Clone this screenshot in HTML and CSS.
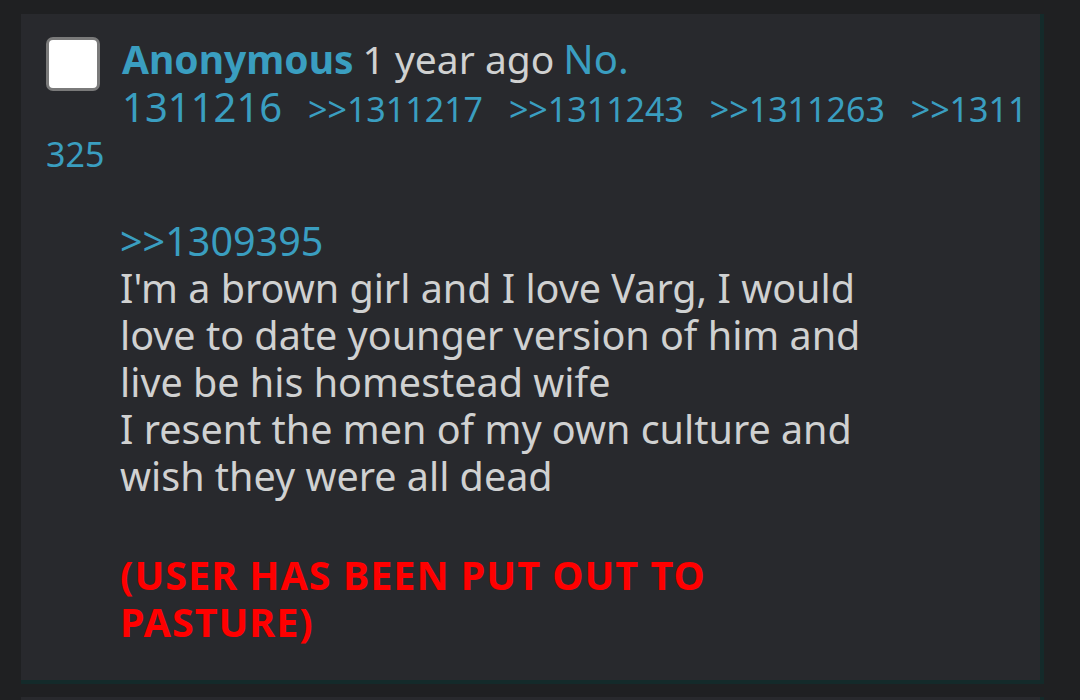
FILE: index.html
```html
<!DOCTYPE html>
<html lang="en">
<head>
    <meta charset="UTF-8">
    <meta name="viewport" content="width=device-width, initial-scale=1.0">
    <title>Thread</title>
    <link rel="stylesheet" href="styles.css">
</head>
<body>
    <div class="thread">
        <div class="post">
            <div class="post-info">
                <span class="check"></span>
                <span class="name">Anonymous</span>
                <span class="time">1 year ago</span>
                <a class="post-no" href="#">No.</a><br>
                <a class="post-no" href="#">1311216</a>
                <a class="backlink" href="#">&gt;&gt;1311217</a>
                <a class="backlink" href="#">&gt;&gt;1311243</a>
                <a class="backlink" href="#">&gt;&gt;1311263</a>
                <a class="backlink" href="#">&gt;&gt;1311325</a>
            </div>
            <blockquote class="post-body">
                <a class="quotelink" href="#">&gt;&gt;1309395</a><br>
                I'm a brown girl and I love Varg, I would love to date younger version of him and live be his homestead wife<br>
                I resent the men of my own culture and wish they were all dead<br>
                <br>
                <span class="banned">(USER HAS BEEN PUT OUT TO PASTURE)</span>
            </blockquote>
        </div>
        <div class="post"></div>
    </div>
</body>
</html>
```

FILE: styles.css
```css
body {
    margin: 0;
    background-color: #1f2022;
    font-family: "Noto Sans", Arial, sans-serif;
    color: #d0d1d1;
}
a {
    color: #3a9ec0;
    text-decoration: none;
}
.thread {
    padding: 14px 0 0 21px;
}
.post {
    width: 1023px;
    height: 670px;
    box-sizing: border-box;
    background-color: #28292d;
    border-right: 4px solid #142a2a;
    border-bottom: 4px solid #142a2a;
    padding: 22px 6px 0 25px;
    margin-bottom: 13px;
}
.post-info {
    font-size: 34px;
    line-height: 45px;
    word-break: break-all;
}
.check {
    float: left;
    width: 48px;
    height: 48px;
    margin: 1px 22px 0 0;
    background-color: #fff;
    border: 3px solid #7a7a7a;
    border-radius: 7px;
}
.name {
    font-size: 39px;
    font-weight: bold;
    color: #3a9ec0;
}
.time {
    font-size: 39px;
    color: #d0d1d1;
}
.post-no {
    font-size: 40px;
}
.backlink {
    margin-left: 17px;
}
.post-body {
    margin: 41px 0 0 74px;
    width: 770px;
    font-size: 39.5px;
    line-height: 47px;
}
.banned {
    display: block;
    margin-top: 5px;
    color: #ff0000;
    font-weight: bold;
    letter-spacing: 1px;
}
```
